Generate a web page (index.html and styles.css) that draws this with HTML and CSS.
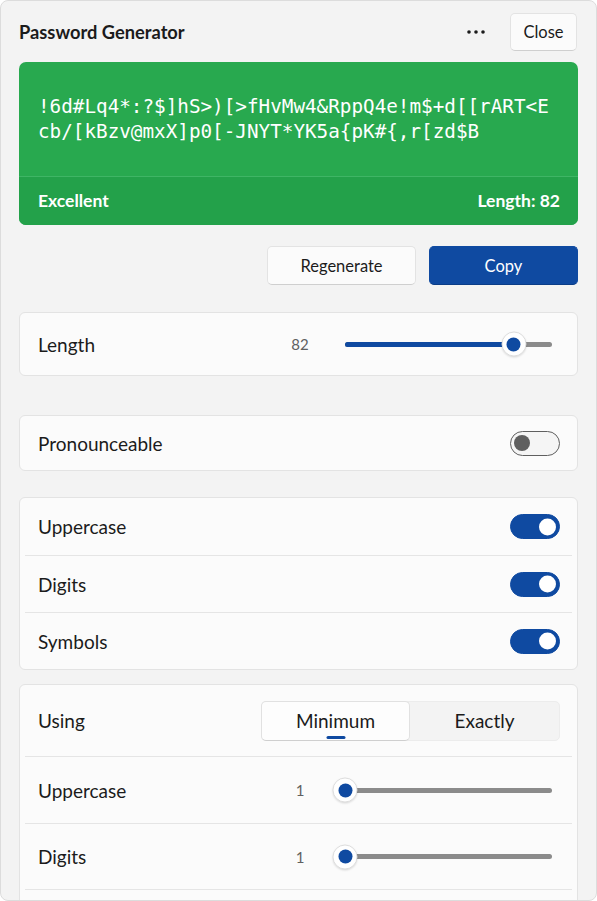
FILE: index.html
```html
<!DOCTYPE html>
<html lang="en">
<head>
<meta charset="UTF-8">
<meta name="viewport" content="width=device-width, initial-scale=1.0">
<title>Password Generator</title>
<link rel="stylesheet" href="styles.css">
</head>
<body>
  <div class="window">
    <header class="titlebar">
      <h1 class="title">Password Generator</h1>
      <button class="icon-btn" aria-label="More">
        <svg width="20" height="6" viewBox="0 0 20 6"><circle cx="3" cy="3" r="1.8"/><circle cx="10" cy="3" r="1.8"/><circle cx="17" cy="3" r="1.8"/></svg>
      </button>
      <button class="btn btn-close">Close</button>
    </header>

    <main class="content">
      <section class="result">
        <div class="password">!6d#Lq4*:?$]hS&gt;)[&gt;fHvMw4&amp;RppQ4e!m$+d[[rART&lt;Ecb/[kBzv@mxX]p0[-JNYT*YK5a{pK#{,r[zd$B</div>
        <div class="strength">
          <span>Excellent</span>
          <span>Length: 82</span>
        </div>
      </section>

      <div class="actions">
        <button class="btn">Regenerate</button>
        <button class="btn btn-accent">Copy</button>
      </div>

      <div class="card card-length">
        <div class="row">
          <span class="label">Length</span>
          <span class="value">82</span>
          <div class="slider">
            <div class="track"><div class="fill" style="width: 81.6%"></div></div>
            <div class="thumb" style="left: 81.6%"></div>
          </div>
        </div>
      </div>

      <div class="card card-pron">
        <div class="row">
          <span class="label">Pronounceable</span>
          <span class="toggle"></span>
        </div>
      </div>

      <div class="card card-chars">
        <div class="row">
          <span class="label">Uppercase</span>
          <span class="toggle on"></span>
        </div>
        <div class="row">
          <span class="label">Digits</span>
          <span class="toggle on"></span>
        </div>
        <div class="row">
          <span class="label">Symbols</span>
          <span class="toggle on"></span>
        </div>
      </div>

      <div class="card card-using">
        <div class="row row-using">
          <span class="label">Using</span>
          <div class="segmented">
            <span class="segment selected">Minimum</span>
            <span class="segment">Exactly</span>
          </div>
        </div>
        <div class="row row-slider">
          <span class="label">Uppercase</span>
          <span class="value">1</span>
          <div class="slider">
            <div class="track"><div class="fill" style="width: 0%"></div></div>
            <div class="thumb" style="left: 0%"></div>
          </div>
        </div>
        <div class="row row-slider">
          <span class="label">Digits</span>
          <span class="value">1</span>
          <div class="slider">
            <div class="track"><div class="fill" style="width: 0%"></div></div>
            <div class="thumb" style="left: 0%"></div>
          </div>
        </div>
      </div>
    </main>
  </div>
</body>
</html>
```

FILE: styles.css
```css
* {
  box-sizing: border-box;
}
body {
  margin: 0;
  background: #ffffff;
  font-family: Lato, 'Noto Sans', sans-serif;
  color: #1b1b1b;
}
.window {
  width: 597px;
  height: 901px;
  background: #f3f3f3;
  border: 1px solid #dcdcdc;
  border-radius: 8px;
  overflow: hidden;
}
.titlebar {
  display: flex;
  align-items: center;
  height: 61px;
  padding: 0 19px 0 18px;
}
.title {
  flex: 1;
  margin: 0;
  font-size: 18.3px;
  font-weight: 700;
}
.icon-btn {
  width: 40px;
  height: 38px;
  margin-right: 14px;
  border: none;
  background: transparent;
  display: flex;
  align-items: center;
  justify-content: center;
  fill: #1b1b1b;
}
.btn {
  font-family: inherit;
  font-size: 16.5px;
  color: #1b1b1b;
  background: #fbfbfb;
  border: 1px solid #e3e3e3;
  border-bottom-color: #cfcfcf;
  border-radius: 5px;
  height: 39px;
  cursor: pointer;
}
.btn-close {
  width: 67px;
  height: 38px;
}
.btn-accent {
  background: #0f4aa1;
  border-color: #0f4aa1;
  border-bottom-color: #0b3d87;
  color: #ffffff;
}
.content {
  padding: 0 18px;
}

/* generated password box */
.result {
  background: #28a94f;
  border-radius: 7px;
  color: #ffffff;
  overflow: hidden;
}
.password {
  font-family: 'DejaVu Sans Mono', monospace;
  font-size: 19.3px;
  line-height: 25px;
  padding: 32px 19px 32px 19px;
  word-break: break-all;
}
.strength {
  display: flex;
  justify-content: space-between;
  align-items: center;
  height: 49px;
  padding: 0 18px 2px 19px;
  background: #23a14a;
  border-top: 1px solid #3fb565;
  font-size: 17.5px;
  font-weight: 700;
}

.actions {
  display: flex;
  justify-content: flex-end;
  gap: 13px;
  margin-top: 21px;
}
.actions .btn {
  width: 149px;
}

/* setting cards */
.card {
  background: #fbfbfb;
  border: 1px solid #e3e3e3;
  border-radius: 6px;
  padding: 0 5px;
}
.card-length {
  margin-top: 27px;
}
.card-pron {
  margin-top: 39px;
}
.card-chars {
  margin-top: 26px;
}
.card-using {
  margin-top: 14px;
  padding-bottom: 30px;
}
.row {
  display: flex;
  align-items: center;
  padding: 0 12px 0 13px;
  height: 57px;
}
.row + .row {
  border-top: 1px solid #e5e5e5;
}
.card-length .row {
  height: 62px;
}
.card-pron .row {
  height: 54px;
}
.row-using {
  height: 71px;
}
.row-slider {
  height: 67px;
}
.row-slider:last-child {
  border-bottom: 1px solid #e5e5e5;
}
.label {
  flex: 1;
  font-size: 19px;
}
.value {
  width: 42px;
  text-align: center;
  font-size: 15px;
  color: #606060;
}

/* slider */
.slider {
  position: relative;
  width: 207px;
  height: 25px;
  margin: 0 8px 0 24px;
  display: flex;
  align-items: center;
}
.track {
  width: 100%;
  height: 5px;
  border-radius: 3px;
  background: #8b8b8b;
}
.fill {
  height: 100%;
  border-radius: 3px;
  background: #0f4aa1;
}
.thumb {
  position: absolute;
  top: 50%;
  width: 25px;
  height: 25px;
  border-radius: 50%;
  background: #ffffff;
  border: 1px solid #dedede;
  box-shadow: 0 1px 2px rgba(0, 0, 0, 0.12);
  transform: translate(-50%, -50%);
}
.thumb::after {
  content: "";
  position: absolute;
  left: 50%;
  top: 50%;
  width: 14px;
  height: 14px;
  border-radius: 50%;
  background: #0f4aa1;
  transform: translate(-50%, -50%);
}

/* toggle switch */
.toggle {
  position: relative;
  width: 50px;
  height: 25px;
  border-radius: 13px;
  border: 1px solid #5f5f5f;
  background: #f5f5f5;
}
.toggle::after {
  content: "";
  position: absolute;
  left: 3px;
  top: 50%;
  width: 16px;
  height: 16px;
  border-radius: 50%;
  background: #5f5f5f;
  transform: translateY(-50%);
}
.toggle.on {
  background: #0f4aa1;
  border-color: #0f4aa1;
}
.toggle.on::after {
  left: auto;
  right: 3px;
  width: 17px;
  height: 17px;
  background: #ffffff;
}

/* segmented control */
.segmented {
  display: flex;
  width: 299px;
  height: 40px;
  background: #f3f3f3;
  border: 1px solid #ececec;
  border-radius: 5px;
}
.segment {
  flex: 1;
  display: flex;
  align-items: center;
  justify-content: center;
  font-size: 19px;
  position: relative;
}
.segment.selected {
  flex: 0 0 149px;
  margin: -1px 0 -1px -1px;
  background: #fdfdfd;
  border: 1px solid #e1e1e1;
  border-bottom-color: #cfcfcf;
  border-radius: 5px;
}
.segment.selected::after {
  content: "";
  position: absolute;
  bottom: 1px;
  left: 50%;
  width: 19px;
  height: 3px;
  border-radius: 2px;
  background: #0f4aa1;
  transform: translateX(-50%);
}
```
